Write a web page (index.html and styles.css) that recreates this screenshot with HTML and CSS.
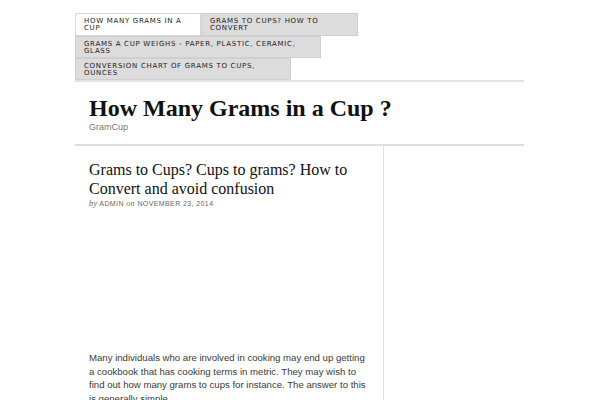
FILE: index.html
```html
<!DOCTYPE html>
<html>
<head>
<meta charset="utf-8">
<link rel="stylesheet" href="styles.css">
</head>
<body>
<div class="page">
  <nav class="nav">
    <a class="tab tab-active tab-1" href="#">How many grams in a cup</a>
    <a class="tab tab-2" href="#">Grams to Cups? How to Convert</a>
    <a class="tab tab-3" href="#">Grams a cup weighs - paper, plastic, ceramic, glass</a>
    <a class="tab tab-4" href="#">Conversion chart of grams to cups, ounces</a>
  </nav>
  <header class="header">
    <h1 class="site-title">How Many Grams in a Cup ?</h1>
    <p class="site-desc">GramCup</p>
  </header>
  <div class="main">
    <article class="post">
      <h2 class="post-title">Grams to Cups? Cups to grams? How to Convert and avoid confusion</h2>
      <p class="meta"><em>by</em> ADMIN <em>on</em> NOVEMBER 23, 2014</p>
      <div class="media"></div>
      <p class="text">Many individuals who are involved in cooking may end up getting a cookbook that has cooking terms in metric. They may wish to find out how many grams to cups for instance. The answer to this is generally simple.</p>
    </article>
    <aside class="sidebar"></aside>
  </div>
</div>
</body>
</html>
```
FILE: styles.css
```css
html, body { margin: 0; padding: 0; background: #fff; }
body { overflow: hidden; height: 400px; }
.page { width: 449px; margin: 13px 0 0 75px; }
.nav { display: flex; flex-wrap: wrap; border-bottom: 2px solid #e2e2e2; }
.tab {
  display: block; box-sizing: border-box;
  background: #dcdcdc; border: 1px solid #cfcfcf;
  padding: 4px 8px 2px 8px; height: 22px;
  font-family: "DejaVu Sans", sans-serif; font-size: 7px; line-height: 7px;
  letter-spacing: 0.7px; text-transform: uppercase; color: #222; text-decoration: none;
}
.tab-active { background: #fff; border-color: #d8d8d8; }
.tab-1 { width: 126px; height: 23px; }
.tab-2 { width: 157px; height: 23px; }
.tab-3 { width: 246px; }
.tab-4 { width: 216px; }
.header { padding: 13px 14px 11px; border-bottom: 2px solid #dedede; }
.site-title { margin: 0; font-family: "Liberation Serif", serif; font-weight: bold; font-size: 24px; line-height: 26px; color: #111; }
.site-desc { margin: 0; font-family: "Liberation Sans", sans-serif; font-size: 9px; line-height: 12px; color: #777; }
.main { display: flex; }
.post { width: 294px; padding: 14px 0 0 14px; border-right: 1px solid #dcdcdc; min-height: 260px; }
.post-title { margin: 0; font-family: "Liberation Serif", serif; font-weight: normal; font-size: 16px; line-height: 19px; color: #111; }
.meta { margin: 1px 0 0; font-family: "Liberation Sans", sans-serif; font-size: 7px; letter-spacing: 0.4px; color: #666; }
.meta em { font-family: "Liberation Serif", serif; font-size: 8px; }
.media { height: 143px; }
.text { margin: 0; font-family: "Liberation Sans", sans-serif; font-size: 9.6px; line-height: 13.5px; color: #3a3a3a; padding-right: 16px; }
.sidebar { flex: 1; }
```
